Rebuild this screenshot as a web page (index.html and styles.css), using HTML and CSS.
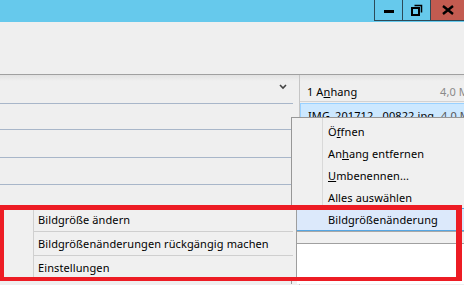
FILE: index.html
```html
<!DOCTYPE html>
<html lang="de">
<head>
  <meta charset="UTF-8">
  <title>Anhang</title>
  <link rel="stylesheet" href="styles.css">
</head>
<body>
  <div class="window">
    <div class="titlebar">
      <div class="winbtns">
        <div class="wbtn"><span class="min"></span></div>
        <div class="wbtn">
          <svg width="12" height="12" viewBox="0 0 12 12"><path d="M3.5 1.5h7v7" fill="none" stroke="#000" stroke-width="1.5"/><rect x="1" y="4" width="7" height="7" fill="none" stroke="#000" stroke-width="2"/></svg>
        </div>
        <div class="wbtn close">
          <svg width="12" height="10" viewBox="0 0 12 10"><path d="M1 1l10 8M11 1L1 9" stroke="#000" stroke-width="2.4"/></svg>
        </div>
      </div>
    </div>
    <div class="toolbar"></div>
    <div class="main">
      <div class="left">
        <div class="row head">
          <svg class="chev" width="8" height="6" viewBox="0 0 8 6"><path d="M1 1l3 3 3-3" fill="none" stroke="#444" stroke-width="1.6"/></svg>
        </div>
        <div class="row r2"></div>
        <div class="row r3"></div>
        <div class="row r4"></div>
        <div class="row r5"></div>
      </div>
      <div class="right">
        <div class="att-head"><span class="name">1 A<u>n</u>hang</span><span class="size">4,0 M</span></div>
        <div class="att-item"><span class="name">IMG_201712...00822.jpg</span><span class="size">4,0 M</span></div>
      </div>
    </div>

    <div class="ctxmenu">
      <div class="mi">Ö<u>f</u>fnen</div>
      <div class="mi">An<u>h</u>ang entfernen</div>
      <div class="mi"><u>U</u>mbenennen...</div>
      <div class="mi">Alles auswählen</div>
      <div class="mi hl">Bildgrößenänderung</div>
      <div class="menu-end"></div>
      <div class="below"></div>
    </div>

    <div class="submenu">
      <div class="si">Bildgröße ändern</div>
      <div class="si">Bildgrößenänderungen rückgängig machen</div>
      <div class="si">Einstellungen</div>
    </div>

    <div class="mark"></div>
  </div>
</body>
</html>
```

FILE: styles.css
```css
body {
  margin: 0;
  font-family: "Noto Sans", "Open Sans", sans-serif;
  font-size: 11px;
  letter-spacing: 0.1px;
  color: #000;
  background: #efefef;
}
.window {
  position: relative;
  width: 464px;
  height: 285px;
  overflow: hidden;
  background: #efefef;
}
.titlebar {
  height: 22px;
  background: #66c9ec;
  display: flex;
  justify-content: flex-end;
}
.winbtns {
  display: flex;
  height: 20px;
  border-bottom: 1px solid #2c4a58;
}
.wbtn {
  width: 27px;
  display: flex;
  align-items: center;
  justify-content: center;
  border-left: 1px solid #2c4a58;
}
.wbtn.close {
  width: 33px;
  background: #c35b50;
}
.wbtn .min {
  width: 10px;
  height: 3px;
  background: #000;
  margin-top: 2px;
}
.toolbar {
  height: 52px;
  border-bottom: 1px solid #a0a0a0;
}
.main {
  display: flex;
  height: 210px;
  background: linear-gradient(#e2e2e2, #efefef 6px);
}
.left {
  width: 293px;
  border-right: 6px solid transparent;
}
.row {
  border-bottom: 1px solid #a8b6c9;
  box-sizing: border-box;
}
.row.head {
  height: 29px;
  display: flex;
  justify-content: flex-end;
  align-items: center;
  padding-right: 6px;
}
.chev {
  margin-top: -4px;
}
.r2 { height: 26px; }
.r3 { height: 28px; }
.r4 { height: 27px; }
.r5 { height: 40px; border-bottom: none; }
.right {
  flex: 1;
  border-left: 1px solid #c5c5c5;
  overflow: hidden;
}
.att-head {
  height: 27px;
  box-sizing: border-box;
  padding: 9px 0 0 7px;
  display: flex;
  border-bottom: 1px solid #d2d2d2;
  white-space: nowrap;
}
.name {
  width: 133px;
  flex: none;
}
.size {
  color: #8a8a8a;
}
.att-item {
  height: 13px;
  margin-top: 1px;
  padding: 3px 0 0 7px;
  display: flex;
  background: #cce8ff;
  border: 1px solid #99d1ff;
  border-right: none;
  white-space: nowrap;
  line-height: 18px;
}
.att-item .size {
  color: #555;
}
.ctxmenu {
  position: absolute;
  left: 291px;
  top: 117px;
  width: 200px;
  border-left: 1px solid #979797;
  border-top: 1px solid #979797;
  background: #f0f0f0;
  padding-top: 3px;
  background-image: linear-gradient(90deg, transparent 30px, #d9d9d9 30px, #d9d9d9 31px, transparent 31px);
}
.mi {
  height: 22px;
  line-height: 22px;
  padding-left: 36px;
  white-space: nowrap;
}
.mi.hl {
  height: 21px;
  line-height: 21px;
  margin-left: 5px;
  padding-left: 31px;
  background: #dce9fb;
  border-top: 1px solid #56a6e2;
  border-bottom: 1px solid #56a6e2;
  margin-top: -1px;
}
.menu-end {
  height: 11px;
  margin-left: 5px;
  border-top: 1px solid #a8a8a8;
  background: #f0f0f0;
}
.below {
  height: 40px;
  margin-left: 5px;
  border-top: 1px solid #a0a0a0;
  background: #fff;
}
.submenu {
  position: absolute;
  left: 4px;
  top: 208px;
  width: 292px;
  height: 73px;
  background: #f0f0f0;
  border-right: 1px solid #9e9e9e;
  background-image: linear-gradient(90deg, transparent 29px, #d0d0d0 29px, #d0d0d0 30px, transparent 30px);
}
.si {
  height: 24px;
  line-height: 24px;
  margin-left: 30px;
  margin-right: 3px;
  padding-left: 4px;
  border-bottom: 1px solid #cfcfcf;
  box-sizing: border-box;
  white-space: nowrap;
}
.si:last-child {
  border-bottom: none;
}
.mark {
  position: absolute;
  left: 0;
  top: 205px;
  width: 462px;
  height: 76px;
  box-sizing: border-box;
  border: 4px solid #ed1c24;
  border-top-width: 5px;
  border-right-width: 6px;
}
```
